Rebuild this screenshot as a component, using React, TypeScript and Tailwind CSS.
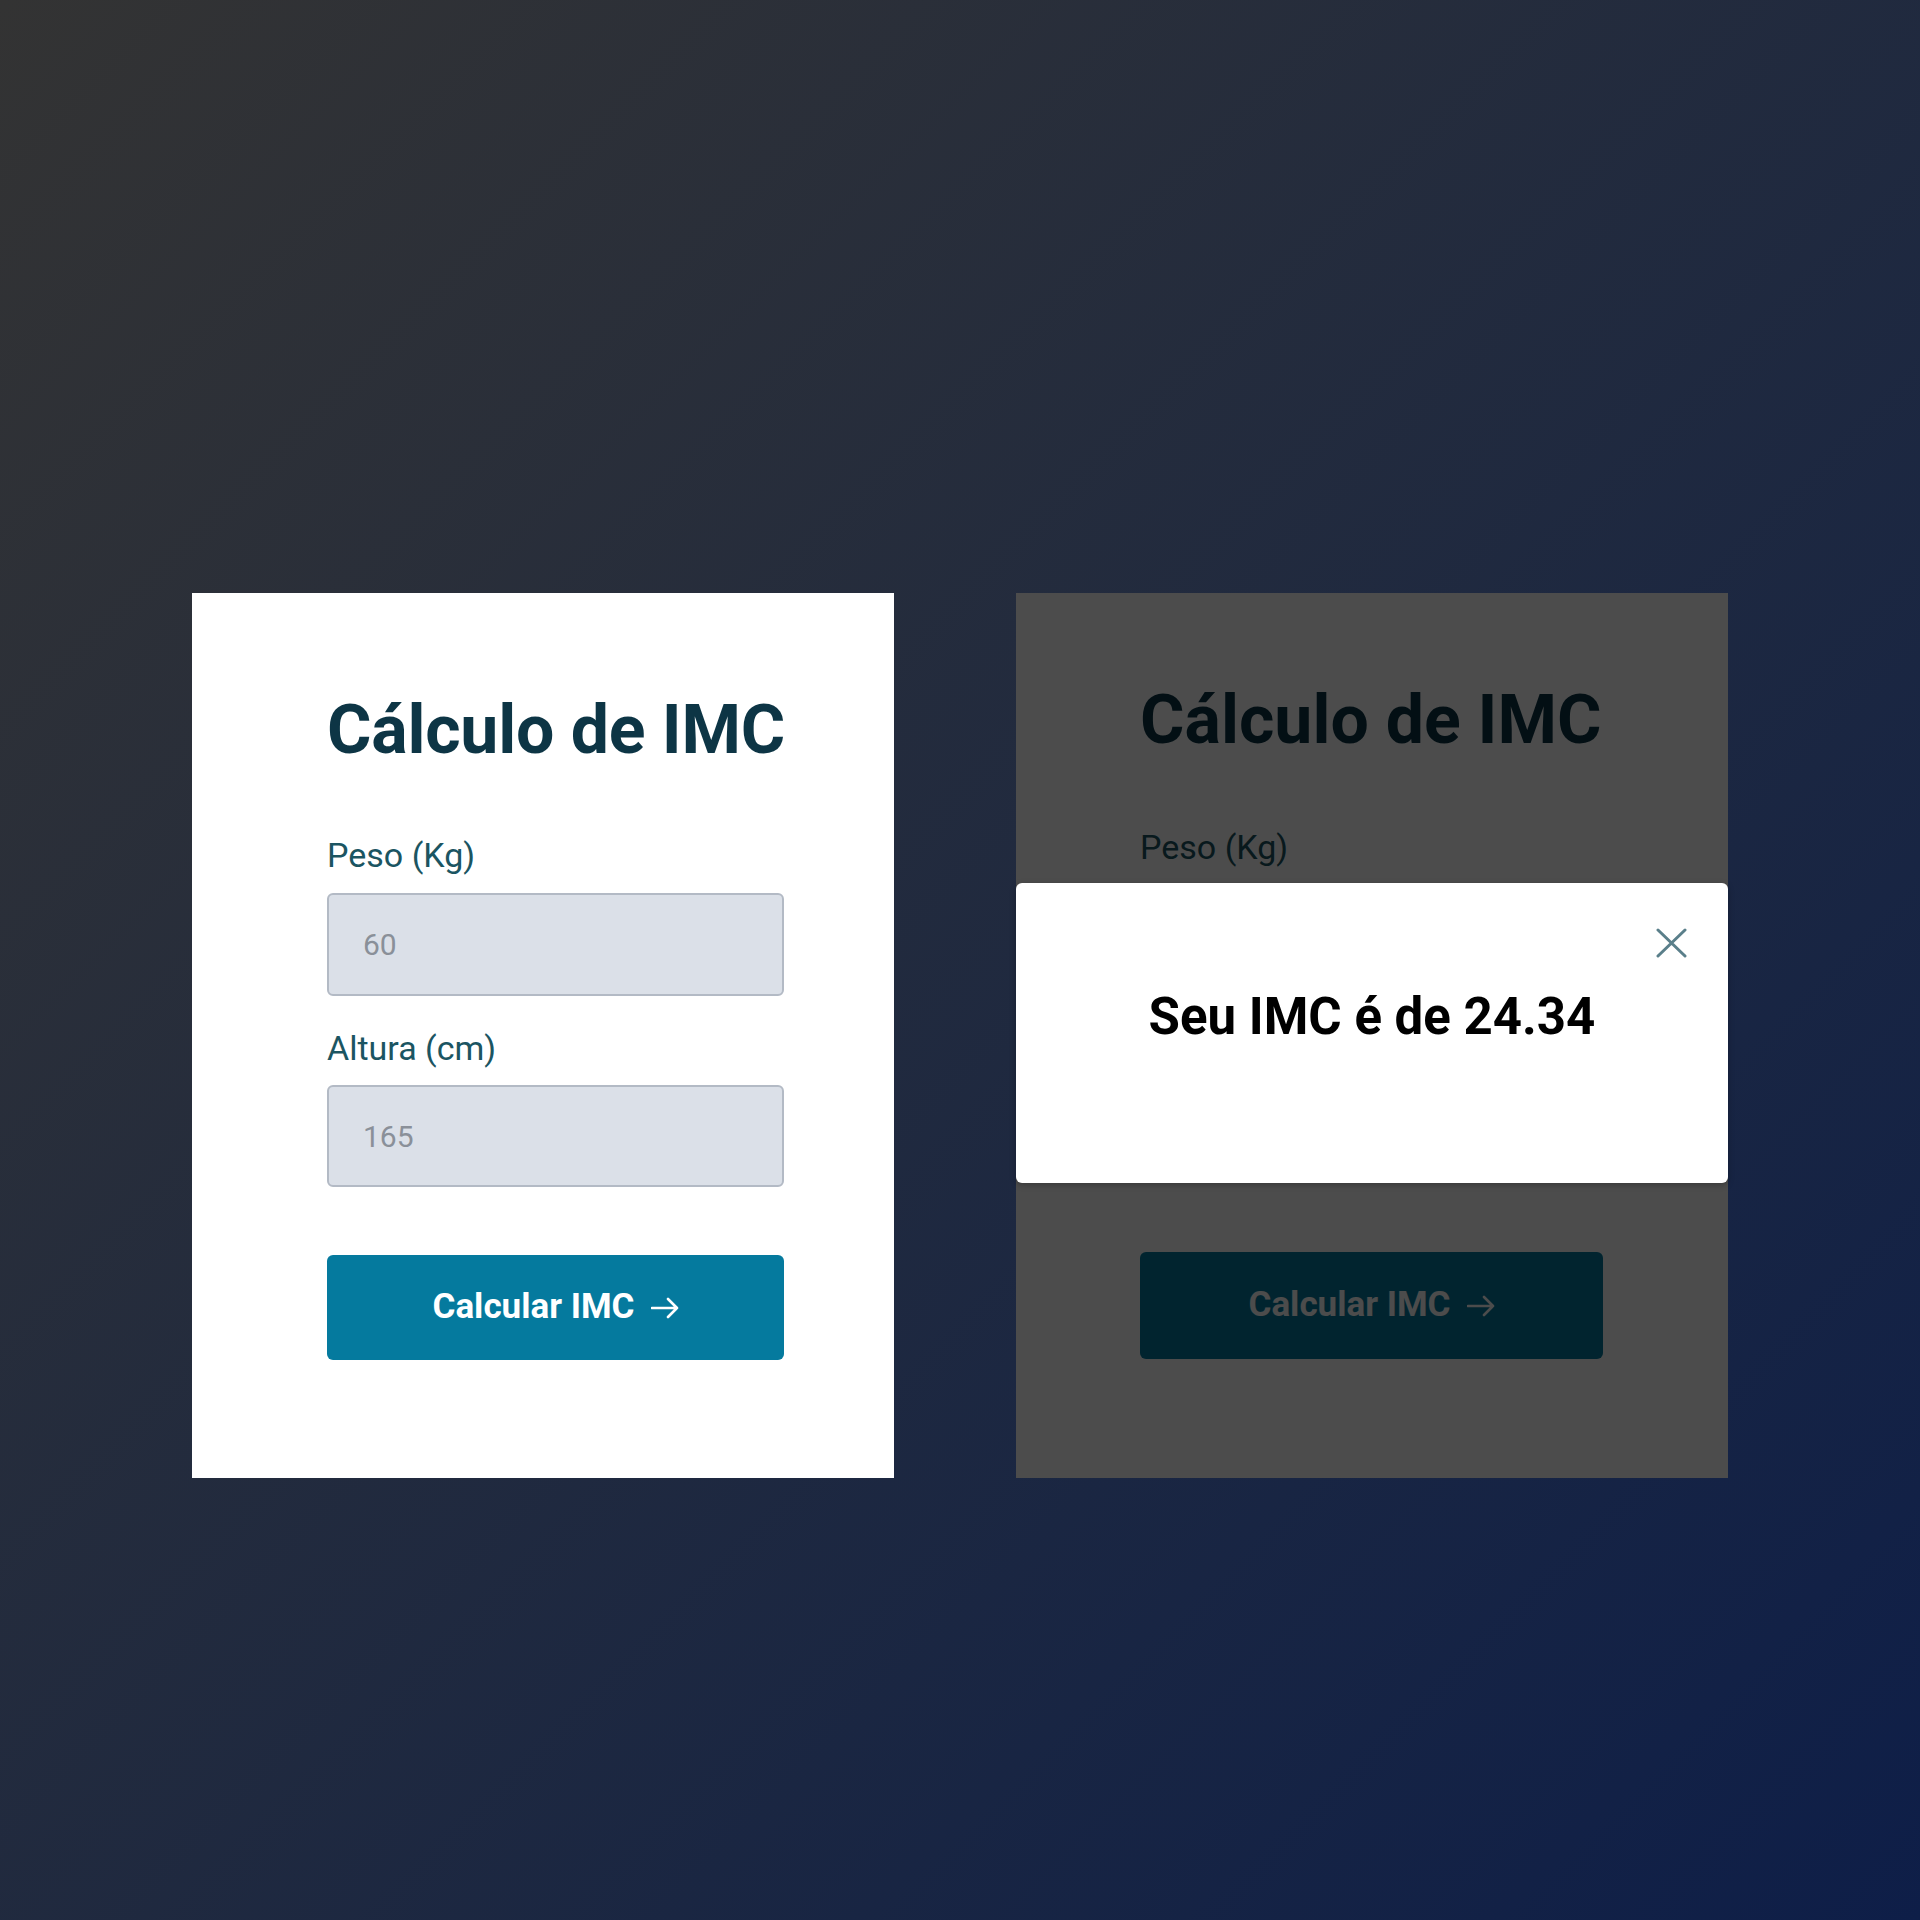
import React from "react";

const font = { fontFamily: "Roboto, 'Noto Sans', Arial, sans-serif" };

function Arrow() {
  return (
    <svg width="28" height="22" viewBox="0 0 28 22" fill="none" className="ml-[16px]">
      <path d="M1 11H26M17 2L26 11L17 20" stroke="currentColor" strokeWidth="2.6" strokeLinecap="round" strokeLinejoin="round" />
    </svg>
  );
}

function Form({ variant }: { variant: "left" | "right" }) {
  const right = variant === "right";
  return (
    <div className={right ? "flex flex-col w-[463px]" : "flex flex-col w-[457px]"}>
      <h1
        className={
          right
            ? "whitespace-nowrap text-[68px] leading-none font-bold text-[#0d3545]"
            : "whitespace-nowrap text-[68px] leading-none font-bold text-[#0d3545] tracking-[-0.25px]"
        }
      >
        Cálculo de IMC
      </h1>
      <label className={right ? "mt-[76px] text-[34px] leading-none text-[#1b5562]" : "mt-[74px] text-[34px] leading-none text-[#1b5562]"}>
        Peso (Kg)
      </label>
      <input
        className="mt-[21px] h-[103px] w-full rounded-md border-2 border-[#b3bac5] bg-[#dbe0e8] pl-[34px] text-[30px] text-[#333] placeholder:text-[#8a9099] outline-none"
        placeholder="60"
        readOnly
      />
      <label className="mt-[35px] text-[34px] leading-none text-[#1b5562]">Altura (cm)</label>
      <input
        className="mt-[20px] h-[102px] w-full rounded-md border-2 border-[#b3bac5] bg-[#dbe0e8] pl-[34px] text-[30px] text-[#333] placeholder:text-[#8a9099] outline-none"
        placeholder="165"
        readOnly
      />
      <button
        className={
          right
            ? "mt-[73px] h-[107px] w-full rounded-md bg-[#057a9e] text-white text-[35px] font-bold flex items-center justify-center"
            : "mt-[68px] h-[105px] w-full rounded-md bg-[#057a9e] text-white text-[35px] font-bold flex items-center justify-center"
        }
      >
        <span>Calcular IMC</span>
        <Arrow />
      </button>
    </div>
  );
}

export default function App() {
  return (
    <div
      style={font}
      className="w-[1920px] h-[1920px] bg-linear-to-br from-[#333333] to-[#0e1e48] flex items-start pt-[593px] pl-[192px] gap-[122px]"
    >
      <div className="w-[702px] h-[885px] bg-white pl-[135px] pt-[103px]">
        <Form variant="left" />
      </div>

      <div className="relative w-[712px] h-[885px] bg-white pl-[124px] pt-[93px]">
        <Form variant="right" />
        <div className="absolute inset-0 bg-black/70" />
        <div className="absolute left-0 right-0 top-[290px] h-[300px] bg-white rounded-md shadow-[0_2px_6px_rgba(0,0,0,0.25)]">
          <p className="pt-[108px] text-center text-[51px] leading-none font-bold text-black">Seu IMC é de 24.34</p>
          <button className="absolute top-[45px] right-[41px] w-[31px] h-[30px] text-[#5a7f8a]" aria-label="Fechar">
            <svg width="31" height="30" viewBox="0 0 31 30" fill="none">
              <path d="M2 2L29 28M29 2L2 28" stroke="currentColor" strokeWidth="3" strokeLinecap="round" />
            </svg>
          </button>
        </div>
      </div>
    </div>
  );
}
